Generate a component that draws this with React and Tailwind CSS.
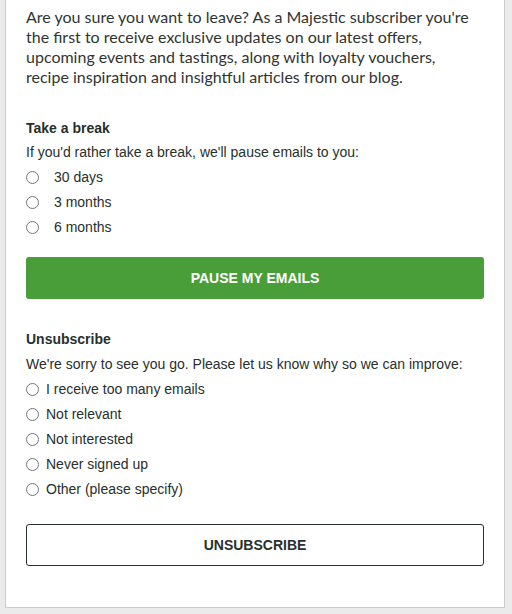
export default function App() {
    const pauseOptions = ["30 days", "3 months", "6 months"];
    const reasons = [
        "I receive too many emails",
        "Not relevant",
        "Not interested",
        "Never signed up",
        "Other (please specify)",
    ];
    return (
        <div className="min-h-[614px] bg-[#ebebeb] pl-[5px] pr-[7px] pb-[7px]">
            <div className="bg-white border-x border-b border-[#cccccc] px-5 pt-[7px] pb-[41px]">
                <p className="max-w-[450px] text-[16px] leading-[20px] text-[#2f3532] font-['Lato',sans-serif]">
                    Are you sure you want to leave? As a Majestic subscriber you're the first to receive exclusive updates on our latest offers, upcoming events and tastings, along with loyalty vouchers, recipe inspiration and insightful articles from our blog.
                </p>
                <form className="font-['Liberation_Sans',Arial,sans-serif] text-[#27302c]">
                    <h3 className="mt-[32px] text-[14px] leading-[18px] font-bold">Take a break</h3>
                    <p className="mt-[6px] text-[14px] leading-[18px]">If you'd rather take a break, we'll pause emails to you:</p>
                    <div className="mt-[7px] flex flex-col gap-[7px]">
                        {pauseOptions.map((o) => (
                            <label key={o} className="flex items-center h-[18px] text-[14px]">
                                <span className="w-[13px] h-[13px] rounded-full border border-[#767676] bg-white"></span>
                                <span className="ml-[15px]">{o}</span>
                            </label>
                        ))}
                    </div>
                    <button
                        type="button"
                        className="mt-[21px] w-full h-[42px] rounded-[3px] bg-[#499e3a] text-white text-[14px] font-bold uppercase"
                    >
                        Pause my emails
                    </button>
                    <h3 className="mt-[31px] text-[14px] leading-[18px] font-bold">Unsubscribe</h3>
                    <p className="mt-[7px] text-[14px] leading-[18px]">We're sorry to see you go. Please let us know why so we can improve:</p>
                    <div className="mt-[7px] flex flex-col gap-[7px]">
                        {reasons.map((o) => (
                            <label key={o} className="flex items-center h-[18px] text-[14px]">
                                <span className="w-[13px] h-[13px] rounded-full border border-[#767676] bg-white"></span>
                                <span className="ml-[7px]">{o}</span>
                            </label>
                        ))}
                    </div>
                    <button
                        type="button"
                        className="mt-[26px] w-full h-[42px] rounded-[3px] border border-[#27302c] bg-white text-[#27302c] text-[14px] font-bold uppercase"
                    >
                        Unsubscribe
                    </button>
                </form>
            </div>
        </div>
    );
}
